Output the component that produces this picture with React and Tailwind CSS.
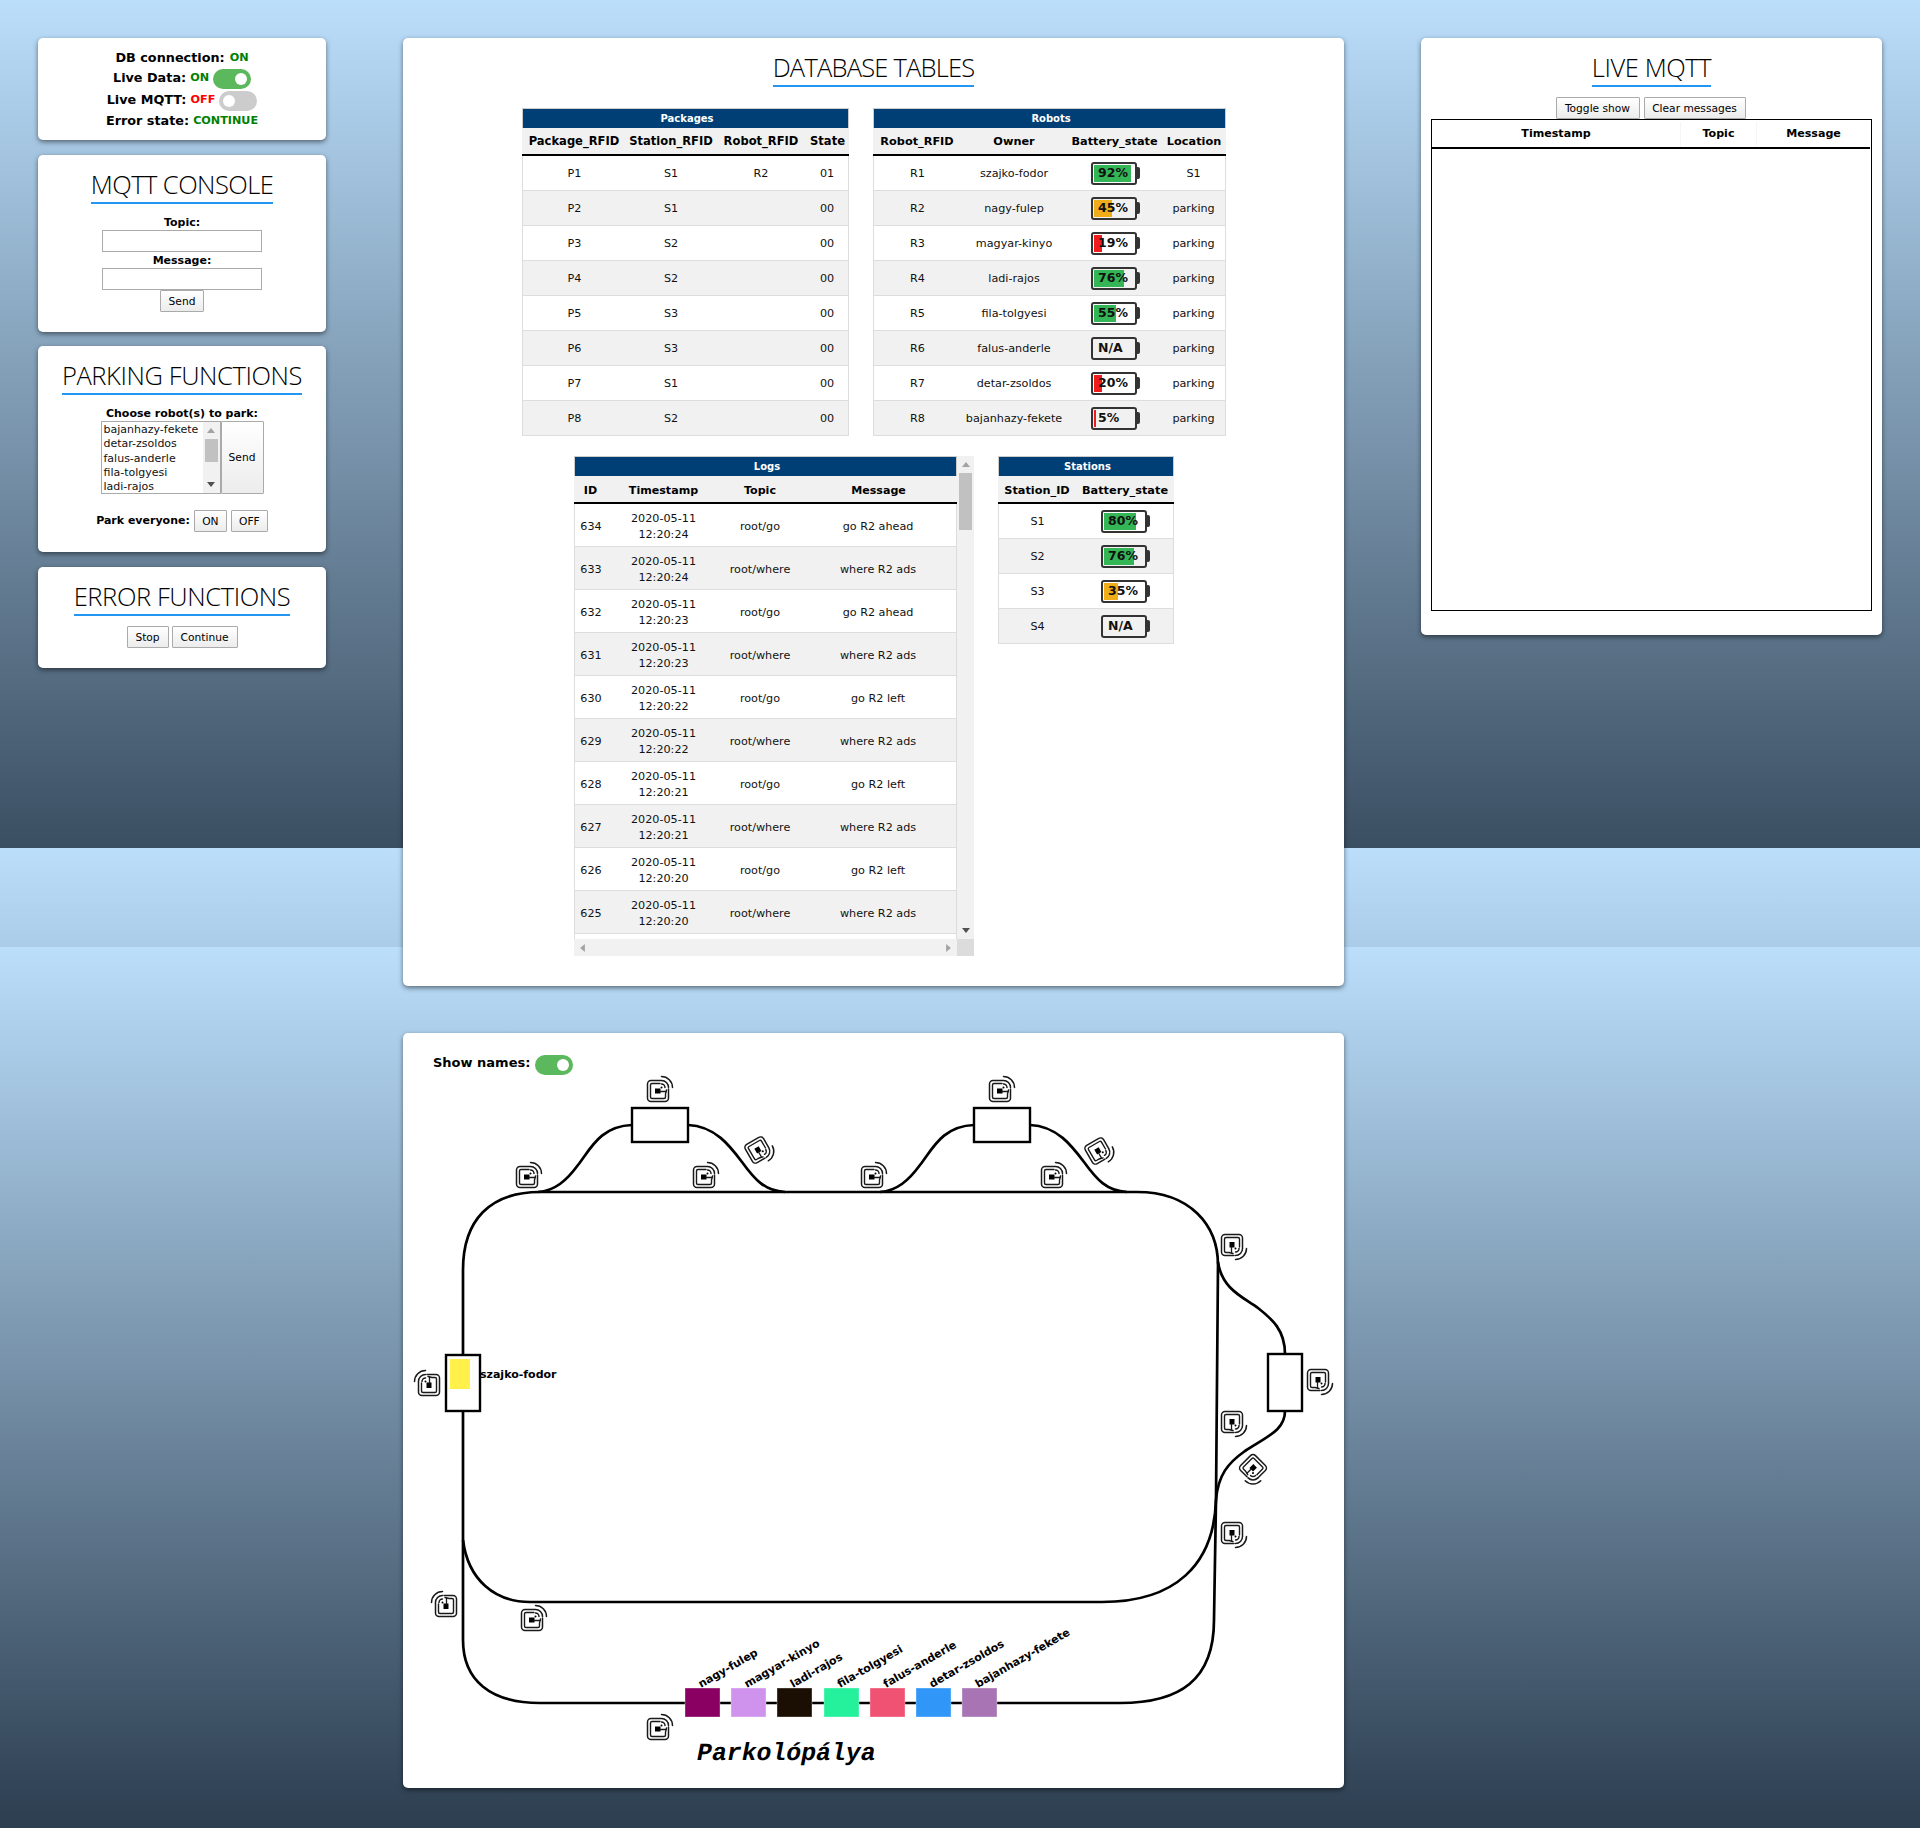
import React from "react";

function Card({ className = "", children }) {
  return (
    <div className={"bg-white rounded-[5px] shadow-[0_2px_5px_rgba(0,0,0,0.5)] " + className}>{children}</div>
  );
}

function Heading({ tracking = "tracking-[-0.4px]", children }) {
  return (
    <div className="flex justify-center pt-3">
      <h2 className={"font-['Open_Sans'] font-light text-[25.5px] leading-[35px] border-b-2 border-[#2196f3] whitespace-nowrap " + tracking}>
        {children}
      </h2>
    </div>
  );
}

function Btn({ className = "", children }) {
  return (
    <button className={"h-[22px] pt-px flex items-center justify-center text-[10.67px] bg-linear-to-b from-white to-[#ececec] border border-[#aaaaaa] rounded-[1px] " + className}>
      {children}
    </button>
  );
}

function Toggle({ on }) {
  return (
    <span className={"w-[38px] h-5 rounded-full flex items-center px-1 " + (on ? "bg-[#5cb85c] justify-end" : "bg-[#cccccc] justify-start")}>
      <span className="w-3 h-3 rounded-full bg-white" />
    </span>
  );
}

function Tri({ dir, color }) {
  const pts = { up: "0,6 5,0 10,6", down: "0,0 10,0 5,6", left: "6,0 6,10 0,5", right: "0,0 0,10 6,5" }[dir];
  const vb = dir === "up" || dir === "down" ? [10, 6] : [6, 10];
  return (
    <svg width={vb[0] - (vb[0] === 10 ? 2 : 1)} height={vb[1] - (vb[1] === 10 ? 2 : 1)} viewBox={`0 0 ${vb[0]} ${vb[1]}`}>
      <polygon points={pts} fill={color} />
    </svg>
  );
}

function Battery({ value }) {
  const na = value === "N/A";
  const n = na ? 0 : parseInt(value);
  const color = n > 50 ? "bg-[#34b556]" : n >= 21 ? "bg-[#f0ad1a]" : "bg-[#ee1c1c]";
  return (
    <div className="inline-flex items-center align-middle ml-[2px]">
      <div className="w-[46px] h-[23px] border-2 border-[#333333] rounded-[3px] p-px">
        <div className="w-full h-full relative flex items-center">
          {!na && <div className={"h-full " + color} style={{ width: value }} />}
          <span className="absolute left-[4px] top-[-1px] text-[12.5px] font-bold leading-[17px] text-[#111111]">{value}</span>
        </div>
      </div>
      <div className="w-[3px] h-[12px] bg-[#333333] rounded-r-[2px]" />
    </div>
  );
}

function DataTable({ title, cols, heads, rows, rowH, textPad = "pt-[2px]", headPad = "pt-[2px]", headSize = "text-[11.52px]", className = "" }) {
  return (
    <table className={"table-fixed border-separate border-spacing-0 text-[11.2px] text-[#111111] " + className}>
      <colgroup>
        {cols.map((c, i) => (
          <col key={i} style={{ width: c }} />
        ))}
      </colgroup>
      <thead>
        <tr>
          <th colSpan={cols.length} className="h-[20px] p-0 pl-[3px] bg-[#003f75] text-white text-[10px] font-bold border-t border-x border-[#cccccc]">
            {title}
          </th>
        </tr>
        <tr>
          {heads.map((h, i) => (
            <th key={i} className={"h-[28px] p-0 bg-[#f1f1f1] font-bold text-black border-b-2 border-black whitespace-nowrap " + headPad + " " + headSize}>
              {h}
            </th>
          ))}
        </tr>
      </thead>
      <tbody>
        {rows.map((r, i) => (
          <tr key={i} className={i % 2 ? "bg-[#f1f1f1]" : "bg-white"}>
            {r.map((c, j) => (
              <td
                key={j}
                style={{ height: rowH }}
                className={
                  "p-0 text-center border-b border-[#dddddd] " +
                  (typeof c === "string" ? textPad + " " : "") +
                  (j === 0 ? "border-l " : "") +
                  (j === r.length - 1 ? "border-r" : "")
                }
              >
                {c}
              </td>
            ))}
          </tr>
        ))}
      </tbody>
    </table>
  );
}

const packages = [
  ["P1", "S1", "R2", "01"],
  ["P2", "S1", "", "00"],
  ["P3", "S2", "", "00"],
  ["P4", "S2", "", "00"],
  ["P5", "S3", "", "00"],
  ["P6", "S3", "", "00"],
  ["P7", "S1", "", "00"],
  ["P8", "S2", "", "00"],
];

const robots = [
  ["R1", "szajko-fodor", <Battery value="92%" />, "S1"],
  ["R2", "nagy-fulep", <Battery value="45%" />, "parking"],
  ["R3", "magyar-kinyo", <Battery value="19%" />, "parking"],
  ["R4", "ladi-rajos", <Battery value="76%" />, "parking"],
  ["R5", "fila-tolgyesi", <Battery value="55%" />, "parking"],
  ["R6", "falus-anderle", <Battery value="N/A" />, "parking"],
  ["R7", "detar-zsoldos", <Battery value="20%" />, "parking"],
  ["R8", "bajanhazy-fekete", <Battery value="5%" />, "parking"],
];

const stations = [
  ["S1", <Battery value="80%" />],
  ["S2", <Battery value="76%" />],
  ["S3", <Battery value="35%" />],
  ["S4", <Battery value="N/A" />],
];

const logs = [
  ["634", "2020-05-11 12:20:24", "root/go", "go R2 ahead"],
  ["633", "2020-05-11 12:20:24", "root/where", "where R2 ads"],
  ["632", "2020-05-11 12:20:23", "root/go", "go R2 ahead"],
  ["631", "2020-05-11 12:20:23", "root/where", "where R2 ads"],
  ["630", "2020-05-11 12:20:22", "root/go", "go R2 left"],
  ["629", "2020-05-11 12:20:22", "root/where", "where R2 ads"],
  ["628", "2020-05-11 12:20:21", "root/go", "go R2 left"],
  ["627", "2020-05-11 12:20:21", "root/where", "where R2 ads"],
  ["626", "2020-05-11 12:20:20", "root/go", "go R2 left"],
  ["625", "2020-05-11 12:20:20", "root/where", "where R2 ads"],
  ["", "", "", ""],
];

function Tag({ x, y, rot = 0 }) {
  return (
    <g transform={`translate(${x} ${y}) rotate(${rot})`} fill="none" stroke="#1a1a1a" strokeLinecap="round">
      <path d="M3,-10.5 H-7 a3.5,3.5 0 0 0 -3.5,3.5 V7 a3.5,3.5 0 0 0 3.5,3.5 H7 a3.5,3.5 0 0 0 3.5,-3.5 V-2" strokeWidth="1.5" />
      <path d="M2,-7.5 H-6 a1.5,1.5 0 0 0 -1.5,1.5 V6 a1.5,1.5 0 0 0 1.5,1.5 H6 a1.5,1.5 0 0 0 1.5,-1.5 V3 L8.5,-1" strokeWidth="1.4" />
      <rect x="-3" y="-2.5" width="5.5" height="5" fill="#000000" stroke="none" />
      <path d="M2,0.5 H8" strokeWidth="1.3" />
      <circle cx="3.5" cy="-3.5" r="1" fill="#000000" stroke="none" />
      <path d="M3.5,-7 A3.5,3.5 0 0 1 7,-3.5" strokeWidth="1.5" />
      <path d="M3.5,-10.5 A7,7 0 0 1 10.5,-3.5" strokeWidth="1.5" />
      <path d="M3.5,-14.5 A11,11 0 0 1 14.5,-3.5" strokeWidth="1.5" />
    </g>
  );
}

const tags = [
  [658, 1091, 0], [527, 1177, 0], [704, 1177, 0], [1000, 1091, 0], [872, 1177, 0], [1052, 1177, 0],
  [532, 1620, 0], [658, 1729, 0],
  [758, 1150, 60], [1098, 1151, 60],
  [1232, 1245, 90], [1318, 1380, 90], [1232, 1422, 90], [1232, 1533, 90],
  [1253, 1468, 135],
  [429, 1385, -90], [446, 1606, -90],
];

const parked = [
  [685, "#890062", "nagy-fulep"],
  [731, "#cf93ee", "magyar-kinyo"],
  [777, "#1a0f02", "ladi-rajos"],
  [824, "#25f09c", "fila-tolgyesi"],
  [870, "#f05274", "falus-anderle"],
  [916, "#3097f8", "detar-zsoldos"],
  [962, "#a874b4", "bajanhazy-fekete"],
];

function Hump({ dx }) {
  return (
    <g transform={`translate(${dx} 0)`}>
      <path d="M632,1125 C600,1126 590,1150 578,1165 C567,1180 555,1191 538,1192" />
      <path d="M688,1125 C715,1126 730,1146 742,1162 C755,1180 765,1191 785,1192" />
      <rect x="632" y="1108" width="56" height="34" fill="#ffffff" strokeWidth="2.4" />
    </g>
  );
}

function TrackMap() {
  return (
    <svg className="block" width="941" height="713" viewBox="403 1075 941 713">
      <g fill="none" stroke="#000000" strokeWidth="2.7">
        <path d="M540,1192 H1137 C1190,1192 1218,1225 1218,1265 L1216,1500" />
        <path d="M540,1192 C490,1192 463,1220 463,1270 V1640 C463,1680 490,1703 540,1703 H1120 C1180,1703 1214,1680 1214,1620 L1216,1500" />
        <path d="M463,1540 C468,1580 495,1602 530,1602 H1102 C1175,1602 1214,1565 1216,1500" />
        <Hump dx={0} />
        <Hump dx={342} />
        <path d="M1218,1262 C1222,1290 1245,1298 1258,1308 C1272,1319 1285,1330 1285,1354" />
        <path d="M1285,1411 C1285,1430 1268,1436 1245,1451 C1228,1463 1218,1475 1216,1500" />
        <rect x="446" y="1355" width="34" height="56" fill="#ffffff" strokeWidth="2.4" />
        <rect x="1268" y="1354" width="34" height="57" fill="#ffffff" strokeWidth="2.4" />
      </g>
      <rect x="450" y="1359" width="20" height="30" fill="#fff04a" />
      <text x="480" y="1378" fontSize="11" fontWeight="700" fontFamily="DejaVu Sans, sans-serif">szajko-fodor</text>
      {tags.map(([x, y, r], i) => (
        <Tag key={i} x={x} y={y} rot={r} />
      ))}
      {parked.map(([x, c, name]) => (
        <g key={name}>
          <rect x={x} y="1688" width="35" height="29" fill={c} />
          <rect x={x} y="1688" width="35" height="29" fill="none" stroke="#ffffff" strokeOpacity="0.35" />
          <text
            transform={`translate(${x + 16} 1688) rotate(-30)`}
            fontSize="11"
            fontWeight="700"
            fontFamily="DejaVu Sans, sans-serif"
          >
            {name}
          </text>
        </g>
      ))}
      <text x="697" y="1760" fontSize="24.8" fontStyle="italic" fontWeight="700" textRendering="geometricPrecision" fontFamily="Liberation Mono, monospace">Parkolópálya</text>
    </svg>
  );
}

export default function App() {
  return (
    <div className="w-[1920px] h-[1828px] overflow-hidden font-['DejaVu_Sans',sans-serif] text-black flex items-start pt-[38px] [background:linear-gradient(#bbdefb,#2c3e50)_0_947px/100%_881px_no-repeat,linear-gradient(#bbdefb,#2c3e50)_0_848px/100%_881px_no-repeat,linear-gradient(#bbdefb,#2c3e50)_0_0/100%_947px_no-repeat]">
      {/* Left column */}
      <div className="ml-[38px] w-[288px] flex flex-col gap-[15px] shrink-0">
        <Card className="h-[102px] pt-[9px] text-[12.8px] font-bold">
          <div className="h-[21px] flex items-center justify-center gap-[5px]">
            DB connection: <span className="mt-[2px] text-[11.2px] text-[#008000]">ON</span>
          </div>
          <div className="h-[22px] flex items-center justify-center gap-1">
            <span className="mb-[2px]">Live Data:</span> <span className="mb-px text-[11.2px] text-[#008000]">ON</span> <Toggle on />
          </div>
          <div className="h-[22px] flex items-center justify-center gap-1">
            <span className="mb-[2px]">Live MQTT:</span> <span className="mb-px text-[11.2px] text-[#ff0000]">OFF</span> <Toggle />
          </div>
          <div className="h-[18px] flex items-center justify-center gap-1">
            Error state: <span className="mt-px text-[11.2px] text-[#008000]">CONTINUE</span>
          </div>
        </Card>

        <Card className="h-[177px]">
          <Heading tracking="tracking-[-0.55px]">MQTT CONSOLE</Heading>
          <div className="mt-[10px] flex flex-col items-center">
            <div className="h-4 pt-px leading-4 text-[11px] font-bold">Topic:</div>
            <div className="w-[160px] h-[22px] border border-[#aaaaaa] bg-white" />
            <div className="h-4 pt-px leading-4 text-[11px] font-bold">Message:</div>
            <div className="w-[160px] h-[22px] border border-[#aaaaaa] bg-white" />
            <Btn className="w-[44px]">Send</Btn>
          </div>
        </Card>

        <Card className="h-[206px] -mt-px">
          <Heading>PARKING FUNCTIONS</Heading>
          <div className="mt-[10px] h-4 pt-px leading-4 text-center text-[11px] font-bold">Choose robot(s) to park:</div>
          <div className="flex justify-center">
            <div className="w-[120px] h-[73px] border border-[#aaaaaa] flex overflow-hidden">
              <div className="flex-1 pl-[2px] pt-px text-[11px] leading-[14.3px] text-[#111111] whitespace-nowrap">
                <div>bajanhazy-fekete</div>
                <div>detar-zsoldos</div>
                <div>falus-anderle</div>
                <div>fila-tolgyesi</div>
                <div>ladi-rajos</div>
              </div>
              <div className="w-[17px] bg-[#f1f1f1] flex flex-col items-center">
                <div className="h-[17px] flex items-center justify-center"><Tri dir="up" color="#a3a3a3" /></div>
                <div className="w-[13px] h-[23px] bg-[#c1c1c1]" />
                <div className="flex-1" />
                <div className="h-[17px] flex items-center justify-center"><Tri dir="down" color="#505050" /></div>
              </div>
            </div>
            <Btn className="!h-[73px] w-[43px]">Send</Btn>
          </div>
          <div className="mt-[16px] flex items-center justify-center gap-1">
            <span className="pt-px text-[11px] font-bold">Park everyone:</span>
            <Btn className="w-[33px]">ON</Btn>
            <Btn className="w-[37px]">OFF</Btn>
          </div>
        </Card>

        <Card className="h-[101px]">
          <Heading>ERROR FUNCTIONS</Heading>
          <div className="mt-[10px] flex justify-center gap-[3px]">
            <Btn className="w-[42px]">Stop</Btn>
            <Btn className="w-[66px]">Continue</Btn>
          </div>
        </Card>
      </div>

      {/* Middle column */}
      <div className="ml-[77px] w-[941px] flex flex-col gap-[47px] shrink-0">
        <Card className="h-[948px]">
          <Heading tracking="tracking-[-0.8px]">DATABASE TABLES</Heading>
          <div className="mt-[21px] pl-[119px] flex gap-[24px] items-start">
            <DataTable
              title="Packages"
              cols={[104, 90, 90, 43]}
              heads={["Package_RFID", "Station_RFID", "Robot_RFID", "State"]}
              rows={packages}
              rowH={35}
              className="w-[327px]"
            />
            <DataTable
              title="Robots"
              cols={[88, 106, 95, 64]}
              heads={["Robot_RFID", "Owner", "Battery_state", "Location"]}
              rows={robots}
              rowH={35}
              headSize="text-[11.3px]"
              className="w-[353px]"
            />
          </div>
          <div className="mt-[20px] pl-[171px] flex gap-[24px] items-start">
            <div className="grid grid-cols-[383px_17px] grid-rows-[483px_17px]">
              <div className="overflow-hidden">
                <DataTable
                  title="Logs"
                  cols={[33, 113, 80, 157]}
                  heads={["ID", "Timestamp", "Topic", "Message"]}
                  rows={logs}
                  rowH={43}
                  textPad="pt-[3px]"
                  headPad="pt-[4px]"
                  headSize="text-[11.1px]"
                  className="w-[383px] leading-4"
                />
              </div>
              <div className="bg-[#f1f1f1] flex flex-col items-center">
                <div className="h-[17px] flex items-center justify-center"><Tri dir="up" color="#a3a3a3" /></div>
                <div className="w-[13px] h-[57px] bg-[#c1c1c1]" />
                <div className="flex-1" />
                <div className="h-[17px] flex items-center justify-center"><Tri dir="down" color="#505050" /></div>
              </div>
              <div className="bg-[#f1f1f1] flex items-center justify-between px-[6px]">
                <Tri dir="left" color="#a3a3a3" />
                <Tri dir="right" color="#a3a3a3" />
              </div>
              <div className="bg-[#dcdcdc]" />
            </div>
            <DataTable
              title="Stations"
              cols={[78, 98]}
              heads={["Station_ID", "Battery_state"]}
              rows={stations}
              rowH={35}
              textPad="pt-[3px]"
              headPad="pt-[4px]"
              headSize="text-[11.3px]"
              className="w-[176px]"
            />
          </div>
        </Card>

        <Card className="h-[755px] overflow-hidden">
          <div className="pt-[22px] pl-[30px] h-[42px] flex items-center gap-[5px]">
            <span className="text-[13px] font-bold mb-[5px]">Show names:</span>
            <Toggle on />
          </div>
          <TrackMap />
        </Card>
      </div>

      {/* Right column */}
      <div className="ml-[77px] w-[461px] shrink-0">
        <Card className="h-[597px]">
          <Heading>LIVE MQTT</Heading>
          <div className="mt-[10px] pr-[2px] flex justify-center gap-1">
            <Btn className="w-[84px]">Toggle show</Btn>
            <Btn className="w-[102px]">Clear messages</Btn>
          </div>
          <div className="mx-[10px] h-[492px] border border-black">
            <div className="w-[438px] h-[29px] pt-[2px] grid grid-cols-[249px_76px_113px] border-b-2 border-black text-[11.1px] font-bold">
              <div className="flex items-center justify-center border-r border-[#f5f5f5]">Timestamp</div>
              <div className="flex items-center justify-center border-r border-[#f5f5f5]">Topic</div>
              <div className="flex items-center justify-center">Message</div>
            </div>
          </div>
        </Card>
      </div>
    </div>
  );
}
